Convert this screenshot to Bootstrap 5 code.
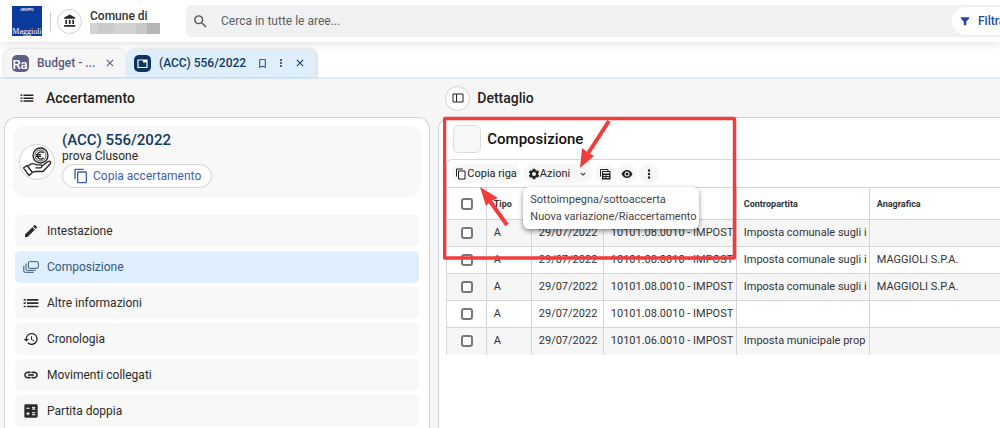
<!DOCTYPE html>
<html lang="it">
<head>
<meta charset="utf-8">
<meta name="viewport" content="width=device-width, initial-scale=1">
<title>Accertamento 556/2022</title>
<link rel="stylesheet" href="https://cdn.jsdelivr.net/npm/bootstrap@5.3.0/dist/css/bootstrap.min.css">
<style>
  body { font-family: Roboto, sans-serif; font-size: 12px; line-height: 16px; color: #2b2b2b; background: #f6f6f6; height: 100vh; overflow: hidden; }
  svg { fill: currentColor; flex: none; }
  button, input, a { color: inherit; }
  .plain-btn { border: 0; background: none; padding: 0; display: inline-flex; align-items: center; }
  .medium { font-weight: 500; }
  .pane-left, .pane-right { min-width: 0; }

  .top-bar { height: 42px; background: #fff; box-shadow: 0 2px 8px rgba(0,0,0,.12); z-index: 2; padding-left: 12px; }
  .brand-logo { width: 30px; height: 30px; }
  .split { width: 1px; height: 20px; background: #ccc; margin-right: 6px; }
  .round { width: 25px; height: 25px; border: 1px solid #d4d4d4; border-radius: 50%; background: #fff; }
  .org { width: 96px; line-height: 14px; color: #333; }
  .masked { width: 70px; height: 11px; background: linear-gradient(90deg, #d3d3d3 0 12%, #cacaca 12% 34%, #d2d2d2 34% 66%, #c8c8c8 66% 82%, #b5b5b5 82%); }
  .search-box { height: 32px; background: #f0f1f3; border-radius: 6px 0 0 6px; color: #555; padding-left: 6px; gap: 12px; }
  .search-box input { border: 0; background: none; outline: 0; min-width: 0; }
  .search-box input::placeholder { color: #5c5f63; opacity: 1; }
  .filter-btn { width: 48px; height: 28px; border-radius: 14px 0 0 14px; background: #fff; color: #2447a6; white-space: nowrap; }

  .tab-strip { height: 37px; background: #fff; border-bottom: 2px solid #dfeefb; padding: 7px 0 0 4px; }
  .doc-tab { height: 28px; border-radius: 8px 8px 0 0; white-space: nowrap; padding: 0 10px 0 8px; }
  .tab-idle { width: 122px; background: #f6f6f6; color: #5c587c; box-shadow: 0 0 3px rgba(0,0,0,.2); }
  .tab-open { width: 190px; background: #dfeefb; color: #123a60; box-shadow: 1px 0 3px rgba(0,0,0,.2); }
  .tile { width: 17px; height: 17px; }

  .pane-left { flex: 0 0 42.8%; }
  .pane-head { height: 38px; font-size: 14px; color: #222; }
  .pane-right .pane-head { padding-left: 7px; gap: 7px; }
  .sheet { background: #fff; border: 1px solid #d3d3d3; border-bottom: 0; border-radius: 12px 12px 0 0; }
  .summary { background: #f8f8f8; border-radius: 12px; height: 71px; padding-left: 6px; gap: 7px; }
  .summary-title { font-size: 15px; color: #123a60; }
  .pic { width: 36px; height: 36px; }
  .copy-btn { height: 24px; border: 1px solid #d4d4d4; border-radius: 12px; background: #fff; color: #3c5fb4; padding: 0 10px; }
  .side-list { margin-top: 18px; padding: 0 10px; }
  .side-item { height: 32px; border-radius: 5px; background: #f8f8f8; color: #2b2b2b; text-decoration: none; }
  .side-item.on { background: #dfeffe; color: #35587c; }

  .right-sheet { border-right: 0; border-top-right-radius: 0; padding-left: 7px; }
  .sheet-title { height: 41px; padding-left: 7px; gap: 6px; font-size: 15px; color: #111; }
  .swatch { width: 28px; height: 28px; border: 1px solid #ddd; border-radius: 6px; background: #f8f8f8; }
  .frame { border: 1px solid #d8d8d8; border-width: 1px 0 0 1px; border-radius: 6px 0 0 0; }
  .tools { height: 27px; gap: 2px; }
  .pill { height: 19px; border-radius: 10px; background: #f7f7f7; color: #222; font-size: 11px; padding: 0 4px; }
  .pill-wide { padding: 0 5px; }
  .drop { top: 27px; left: 76px; width: 176px; height: 42px; background: #fff; border-radius: 6px; box-shadow: 0 2px 5px rgba(0,0,0,.45); z-index: 3; }
  .drop button { height: 17px; font-size: 11px; color: #444; white-space: nowrap; padding-left: 7px; }

  .grid { table-layout: fixed; width: 100%; border-collapse: collapse; font-size: 11px; line-height: 14px; color: #333; }
  .grid th { height: 32px; font-size: 9px; font-weight: 700; }
  .grid td { height: 27px; }
  .grid th, .grid td { border: 1px solid #d4d4d4; border-left: 0; padding: 0 0 0 7px; white-space: nowrap; overflow: hidden; vertical-align: middle; }
  .grid th:last-child, .grid td:last-child { border-right: 0; }
  .grid tbody tr:nth-child(odd) td { background: #f6f6f6; }
  .grid tbody tr:last-child td { border-bottom: 0; }
  .grid input { appearance: none; display: block; width: 12px; height: 12px; border: 2px solid #777; border-radius: 3px; margin: 0 0 0 7px; background: #fff; }
  .c-check { width: 39px; } .c-kind { width: 45px; } .c-date { width: 72px; } .c-text { width: 133px; }

  .marks { left: 4px; top: -2px; z-index: 4; pointer-events: none; }
</style>
</head>
<body class="d-flex flex-column">
<svg class="d-none" aria-hidden="true">
  <symbol id="i-search" viewBox="0 0 24 24"><path d="M15.5 14h-.79l-.28-.27A6.47 6.47 0 0 0 16 9.5 6.5 6.5 0 1 0 9.5 16c1.61 0 3.09-.59 4.23-1.57l.27.28v.79l5 4.99L20.49 19l-4.99-5zm-6 0C7.01 14 5 11.99 5 9.5S7.01 5 9.5 5 14 7.01 14 9.5 11.99 14 9.5 14z"/></symbol>
  <symbol id="i-bank" viewBox="0 0 24 24"><path d="M4 10v7h3v-7H4zm6 0v7h3v-7h-3zM2 22h19v-3H2v3zm14-12v7h3v-7h-3zm-4.500-9L2 6v2h19V6l-9.500-5z"/></symbol>
  <symbol id="i-mark" viewBox="0 0 24 24"><path d="M17 2H7c-1.100 0-2 .9-2 2v18l7-3 7 3V4c0-1.100-.9-2-2-2zm0 17l-5-2.180L7 19V4h10v15z"/></symbol>
  <symbol id="i-more" viewBox="0 0 24 24"><circle cx="12" cy="5" r="2.400"/><circle cx="12" cy="12" r="2.400"/><circle cx="12" cy="19" r="2.400"/></symbol>
  <symbol id="i-close" viewBox="0 0 24 24"><path d="M19 6.410L17.590 5 12 10.590 6.410 5 5 6.410 10.590 12 5 17.590 6.410 19 12 13.410 17.590 19 19 17.590 13.410 12z"/></symbol>
  <symbol id="i-list" viewBox="0 0 24 24"><path d="M1 13.500h3V11H1v2.500zm0 5h3V16H1v2.500zm0-10h3V6H1v2.500zm5 5h17V11H6v2.500zm0 5h17V16H6v2.500zM6 6v2.500h17V6H6z"/></symbol>
  <symbol id="i-copy" viewBox="0 0 24 24"><path d="M16 1H4c-1.100 0-2 .9-2 2v14h2V3h12V1zm3 4H8c-1.100 0-2 .9-2 2v14c0 1.100.9 2 2 2h11c1.100 0 2-.9 2-2V7c0-1.100-.9-2-2-2zm0 16H8V7h11v14z"/></symbol>
  <symbol id="i-edit" viewBox="0 0 24 24"><path d="M3 17.250V21h3.750L17.810 9.940l-3.750-3.750L3 17.250zM20.710 7.040c.39-.39.39-1.020 0-1.410l-2.340-2.340c-.39-.39-1.020-.39-1.410 0l-1.830 1.830 3.750 3.750 1.830-1.830z"/></symbol>
  <symbol id="i-stack" viewBox="0 0 24 18"><g fill="none" stroke="currentColor" stroke-width="1.500"><rect x="8" y="1" width="15" height="10" rx="2"/><path d="M4.500 4v8q0 2 2 2H19M1.200 7v8q0 2 2 2H16"/></g></symbol>
  <symbol id="i-history" viewBox="0 0 24 24"><path d="M13 3c-4.970 0-9 4.030-9 9H1l3.890 3.890.07.14L9 12H6c0-3.870 3.130-7 7-7s7 3.130 7 7-3.130 7-7 7c-1.930 0-3.680-.79-4.940-2.060l-1.420 1.420C8.270 19.990 10.510 21 13 21c4.970 0 9-4.030 9-9s-4.030-9-9-9zm-1 5v5l4.280 2.540.72-1.210-3.500-2.080V8H12z"/></symbol>
  <symbol id="i-link" viewBox="0 0 24 24"><path d="M3.900 12c0-1.710 1.390-3.100 3.100-3.100h4V7H7c-2.760 0-5 2.240-5 5s2.240 5 5 5h4v-1.900H7c-1.710 0-3.100-1.390-3.100-3.100zM8 13h8v-2H8v2zm9-6h-4v1.900h4c1.710 0 3.100 1.390 3.100 3.100s-1.390 3.100-3.100 3.100h-4V17h4c2.760 0 5-2.240 5-5s-2.240-5-5-5z" stroke="currentColor" stroke-width=".6"/></symbol>
  <symbol id="i-calc" viewBox="0 0 24 24"><rect x="2" y="2" width="20" height="20" rx="2"/><path d="M5 8h5M14 6l4 4M18 6l-4 4M5 16h5M7.500 13.500v5M13.500 14.500h5M13.500 17.500h5" stroke="#fff" stroke-width="1.600"/></symbol>
  <symbol id="i-gear" viewBox="0 0 24 24"><path fill-rule="evenodd" d="M9.500 1.500h5l.6 3 1.900 1.100 2.900-1 2.500 4.300-2.300 2v2.200l2.300 2-2.500 4.300-2.900-1-1.900 1.100-.6 3h-5l-.6-3L7 18.400l-2.900 1-2.500-4.300 2.300-2v-2.200l-2.300-2 2.500-4.300 2.900 1 1.900-1.100zM12 8a4 4 0 1 0 0 8 4 4 0 0 0 0-8z"/></symbol>
  <symbol id="i-down" viewBox="0 0 24 24"><path d="M7.400 8.600L12 13.200l4.600-4.600L18 10l-6 6-6-6z"/></symbol>
  <symbol id="i-eye" viewBox="0 0 24 24"><path d="M12 4C7 4 2.700 7.400 1 12c1.700 4.600 6 8 11 8s9.300-3.400 11-8c-1.700-4.600-6-8-11-8zm0 13a5 5 0 1 1 0-10 5 5 0 0 1 0 10zM12 9a3 3 0 1 0 0 6 3 3 0 0 0 0-6z"/></symbol>
  <symbol id="i-export" viewBox="0 0 24 24"><path fill="none" stroke="currentColor" stroke-width="2" d="M3 17V3h15v3"/><path fill-rule="evenodd" d="M6 6h17v17H6zM8 8v3h13V8zm1 6v2h4v-2zm6 0v2h5v-2zm-6 4v2h4v-2zm6 0v2h5v-2z"/></symbol>
  <symbol id="i-panel" viewBox="0 0 24 24"><path fill="none" stroke="currentColor" stroke-width="2" d="M2 4h20v16H2zM9 4v16"/></symbol>
  <symbol id="i-funnel" viewBox="0 0 24 24"><path d="M2 3h20v3l-7 8v8H9v-8L2 6z"/></symbol>
</svg>

<header class="top-bar d-flex align-items-center position-relative flex-shrink-0">
  <svg class="brand-logo me-2" viewBox="0 0 30 30" role="img" aria-label="Gruppo Maggioli"><rect width="30" height="30" fill="#0a3a9c"/><text x="15" y="5" text-anchor="middle" font-family="Liberation Sans, sans-serif" font-size="3" font-weight="700" fill="#fff">GRUPPO</text><text x="15" y="28" text-anchor="middle" font-family="Liberation Serif, serif" font-size="8" fill="#fff">Maggioli</text></svg>
  <span class="split"></span>
  <span class="round d-flex align-items-center justify-content-center me-2"><svg width="14" height="14"><use href="#i-bank"/></svg></span>
  <div class="org medium">Comune di<div class="masked"></div></div>
  <div class="search-box flex-grow-1 d-flex align-items-center">
    <svg width="17" height="17"><use href="#i-search"/></svg>
    <input type="search" class="flex-grow-1 p-0" aria-label="Cerca" placeholder="Cerca in tutte le aree...">
    <button class="plain-btn filter-btn ps-2 gap-2 flex-shrink-0"><svg width="10" height="10"><use href="#i-funnel"/></svg><span class="medium">Filtra</span></button>
  </div>
</header>

<nav class="tab-strip d-flex flex-shrink-0" aria-label="Schede">
  <div class="doc-tab tab-idle medium d-flex align-items-center">
    <svg class="tile me-2" viewBox="0 0 17 17"><rect width="17" height="17" rx="5" fill="#625f8c"/><text x="8" y="14" text-anchor="middle" font-family="Roboto, sans-serif" font-size="13" fill="#fff">Ra</text></svg>
    <span class="flex-grow-1">Budget - ...</span>
    <button class="plain-btn" aria-label="Chiudi Budget"><svg width="12" height="12"><use href="#i-close"/></svg></button>
  </div>
  <div class="doc-tab tab-open medium d-flex align-items-center">
    <svg class="tile me-2" viewBox="0 0 17 17"><rect width="17" height="17" rx="5" fill="#0b3560"/><path d="M4 5h9v7.500H4z" fill="none" stroke="#fff" stroke-width="1.200"/><path d="M9 5h4v2.500H9z" fill="#fff"/></svg>
    <span class="flex-grow-1">(ACC) 556/2022</span>
    <span class="d-flex gap-2"><button class="plain-btn" aria-label="Segnalibro"><svg width="11" height="11"><use href="#i-mark"/></svg></button>
    <button class="plain-btn" aria-label="Altro"><svg width="10" height="10"><use href="#i-more"/></svg></button>
    <button class="plain-btn" aria-label="Chiudi"><svg width="12" height="12"><use href="#i-close"/></svg></button></span>
  </div>
</nav>

<main class="d-flex flex-grow-1 gap-2 ps-1">
  <section class="pane-left d-flex flex-column">
    <h2 class="pane-head medium d-flex align-items-center m-0 ps-3 gap-2"><svg width="14" height="14" class="me-1"><use href="#i-list"/></svg>Accertamento</h2>
    <div class="sheet flex-grow-1">
      <div class="summary d-flex align-items-center mx-2 mt-2">
        <span class="round pic d-flex align-items-center justify-content-center">
          <svg width="30" height="30" viewBox="0 0 30 30"><g fill="none" stroke="#222" stroke-width="1.300"><circle cx="18.500" cy="8.500" r="7.500"/><circle cx="18.500" cy="8.500" r="5.500" stroke-width=".8"/><path d="M21.500 6a3.600 3.600 0 1 0 0 5M14 7.700h5M14 9.400h5"/><path d="M1.500 21l3.500-2.500 5.500 7L7 28.500zM6 19.500c2-3 4-3.500 6.500-2.500l2 .8h4c2 0 2 3 0 3h-5M20 19l6-4.500c2-1 3.500.8 2.300 2.200L21 24.500h-8L9.500 26"/></g></svg>
        </span>
        <div class="pb-1">
          <div class="summary-title medium">(ACC) 556/2022</div>
          <div>prova Clusone</div>
          <button class="copy-btn d-flex align-items-center gap-1"><svg width="16" height="16"><use href="#i-copy"/></svg>Copia accertamento</button>
        </div>
      </div>
      <nav class="side-list d-flex flex-column gap-1" aria-label="Sezioni">
        <a href="#" class="side-item d-flex align-items-center gap-2 ps-2"><svg width="16" height="16"><use href="#i-edit"/></svg>Intestazione</a>
        <a href="#" class="side-item on d-flex align-items-center gap-2 ps-2"><svg width="16" height="14"><use href="#i-stack"/></svg>Composizione</a>
        <a href="#" class="side-item d-flex align-items-center gap-2 ps-2"><svg width="16" height="16"><use href="#i-list"/></svg>Altre informazioni</a>
        <a href="#" class="side-item d-flex align-items-center gap-2 ps-2"><svg width="16" height="16"><use href="#i-history"/></svg>Cronologia</a>
        <a href="#" class="side-item d-flex align-items-center gap-2 ps-2"><svg width="16" height="16"><use href="#i-link"/></svg>Movimenti collegati</a>
        <a href="#" class="side-item d-flex align-items-center gap-2 ps-2"><svg width="16" height="16"><use href="#i-calc"/></svg>Partita doppia</a>
      </nav>
    </div>
  </section>

  <section class="pane-right flex-grow-1 d-flex flex-column">
    <h2 class="pane-head medium d-flex align-items-center m-0"><button class="round p-0 d-flex align-items-center justify-content-center" aria-label="Pannello"><svg width="12" height="12"><use href="#i-panel"/></svg></button>Dettaglio</h2>
    <div class="sheet right-sheet flex-grow-1 position-relative">
      <div class="sheet-title medium d-flex align-items-center"><span class="swatch"></span>Composizione</div>
      <div class="frame position-relative">
        <div class="tools d-flex align-items-center ps-1">
          <button class="plain-btn pill"><svg width="12" height="12"><use href="#i-copy"/></svg>Copia riga</button>
          <button class="plain-btn pill pill-wide"><svg width="12" height="12"><use href="#i-gear"/></svg>Azioni<svg width="10" height="10" class="ms-2"><use href="#i-down"/></svg></button>
          <button class="plain-btn pill" aria-label="Esporta"><svg width="12" height="12"><use href="#i-export"/></svg></button>
          <button class="plain-btn pill" aria-label="Mostra"><svg width="12" height="12"><use href="#i-eye"/></svg></button>
          <button class="plain-btn pill" aria-label="Altro"><svg width="12" height="12"><use href="#i-more"/></svg></button>
        </div>
        <div class="drop position-absolute d-flex flex-column pt-1"><button class="plain-btn">Sottoimpegna/sottoaccerta</button><button class="plain-btn">Nuova variazione/Riaccertamento</button></div>
        <table class="grid">
          <colgroup><col class="c-check"><col class="c-kind"><col class="c-date"><col class="c-text"><col class="c-text"><col></colgroup>
          <thead><tr><th><input type="checkbox" aria-label="Seleziona tutto"></th><th>Tipo</th><th></th><th></th><th>Contropartita</th><th>Anagrafica</th></tr></thead>
          <tbody>
            <tr><td><input type="checkbox" aria-label="Riga 1"></td><td>A</td><td>29/07/2022</td><td>10101.08.0010 - IMPOST</td><td>Imposta comunale sugli i</td><td></td></tr>
            <tr><td><input type="checkbox" aria-label="Riga 2"></td><td>A</td><td>29/07/2022</td><td>10101.08.0010 - IMPOST</td><td>Imposta comunale sugli i</td><td>MAGGIOLI S.P.A.</td></tr>
            <tr><td><input type="checkbox" aria-label="Riga 3"></td><td>A</td><td>29/07/2022</td><td>10101.08.0010 - IMPOST</td><td>Imposta comunale sugli i</td><td>MAGGIOLI S.P.A.</td></tr>
            <tr><td><input type="checkbox" aria-label="Riga 4"></td><td>A</td><td>29/07/2022</td><td>10101.08.0010 - IMPOST</td><td></td><td></td></tr>
            <tr><td><input type="checkbox" aria-label="Riga 5"></td><td>A</td><td>29/07/2022</td><td>10101.06.0010 - IMPOST</td><td>Imposta municipale prop</td><td></td></tr>
          </tbody>
        </table>
      </div>
      <svg class="marks position-absolute" width="294" height="144" viewBox="443 116 294 144" aria-hidden="true"><g fill="none" stroke="#f03c3c"><rect x="444.500" y="118.500" width="290" height="139.500" rx="1" stroke-width="3.500"/><path stroke-width="4" d="M609 121L587 155M507 225L487 197"/></g><path fill="#f03c3c" d="M580 168l2-20 5 4 7 4zM480 187l18 11-7 3-5 5z"/></svg>
    </div>
  </section>
</main>
<script src="https://cdn.jsdelivr.net/npm/bootstrap@5.3.0/dist/js/bootstrap.bundle.min.js"></script>
</body>
</html>
